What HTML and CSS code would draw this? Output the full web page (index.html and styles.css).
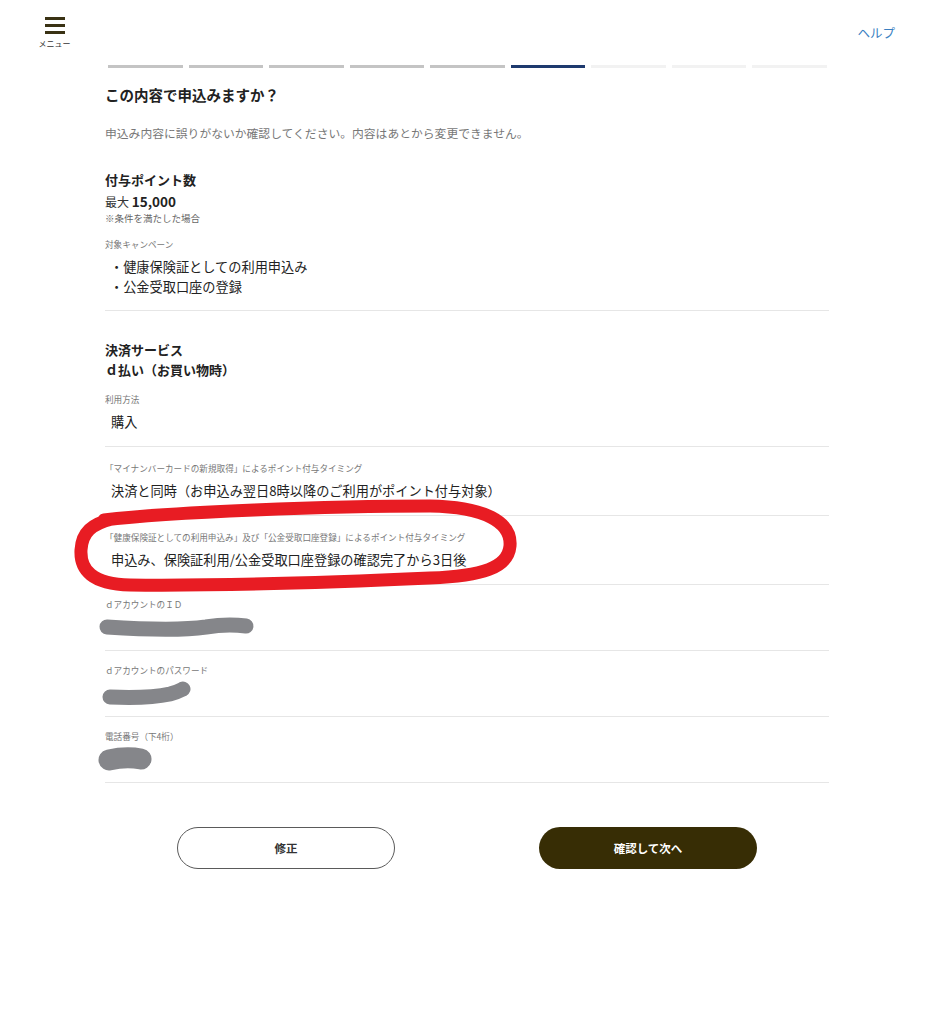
FILE: index.html
```html
<!DOCTYPE html>
<html lang="ja">
<head>
    <meta charset="UTF-8">
    <meta name="viewport" content="width=device-width, initial-scale=1.0">
    <title>申込み内容の確認</title>
    <link rel="stylesheet" href="styles.css">
</head>
<body>

    <header class="header">
        <div class="menu">
            <span class="menu-bar"></span>
            <span class="menu-bar"></span>
            <span class="menu-bar"></span>
            <span class="menu-text">メニュー</span>
        </div>
        <a href="#" class="help">ヘルプ</a>
    </header>

    <div class="container">
        <div class="progress">
            <span class="step done"></span>
            <span class="step done"></span>
            <span class="step done"></span>
            <span class="step done"></span>
            <span class="step done"></span>
            <span class="step current"></span>
            <span class="step"></span>
            <span class="step"></span>
            <span class="step"></span>
        </div>

        <h1 class="title">この内容で申込みますか？</h1>
        <p class="lead">申込み内容に誤りがないか確認してください。内容はあとから変更できません。</p>

        <div class="section points">
            <h2 class="heading">付与ポイント数</h2>
            <p class="amount">最大 <b>15,000</b></p>
            <p class="note">※条件を満たした場合</p>
            <p class="label campaign-label">対象キャンペーン</p>
            <ul class="campaign-list">
                <li>・健康保険証としての利用申込み</li>
                <li>・公金受取口座の登録</li>
            </ul>
        </div>

        <div class="section service">
            <h2 class="heading">決済サービス</h2>
            <h2 class="heading">ｄ払い（お買い物時）</h2>
            <p class="label service-label">利用方法</p>
            <p class="value">購入</p>
        </div>

        <div class="row">
            <p class="label">「マイナンバーカードの新規取得」によるポイント付与タイミング</p>
            <p class="value">決済と同時（お申込み翌日8時以降のご利用がポイント付与対象）</p>
        </div>

        <div class="row">
            <p class="label">「健康保険証としての利用申込み」及び「公金受取口座登録」によるポイント付与タイミング</p>
            <p class="value">申込み、保険証利用/公金受取口座登録の確認完了から3日後</p>
        </div>

        <div class="row masked">
            <p class="label">ｄアカウントのＩＤ</p>
            <div class="value">
                <svg class="mask" width="170" height="24" viewBox="0 0 170 24">
                    <path d="M9 12 C40 14 80 16 108 12 C126 9 140 10 148 11" />
                </svg>
            </div>
        </div>

        <div class="row masked">
            <p class="label">ｄアカウントのパスワード</p>
            <div class="value">
                <svg class="mask" width="100" height="24" viewBox="0 0 100 24">
                    <path d="M12 16 C35 17 58 16 72 13 C80 11 83 9 85 8" />
                </svg>
            </div>
        </div>

        <div class="row masked">
            <p class="label">電話番号（下4桁）</p>
            <div class="value">
                <svg class="mask" width="60" height="24" viewBox="0 0 60 24">
                    <path d="M11 13 C20 11 32 10 43 12" style="stroke-width:21" />
                </svg>
            </div>
        </div>

        <div class="buttons">
            <button class="btn btn-back" type="button">修正</button>
            <button class="btn btn-next" type="button">確認して次へ</button>
        </div>
    </div>

    <!-- 赤丸の書き込み -->
    <svg class="circle-mark" width="934" height="620" viewBox="0 0 934 620">
        <path d="M104 520 C170 512 330 506 430 506 C485 507 512 522 510 546 C508 568 482 576 430 578 C340 582 220 586 130 585 C92 584 80 570 81 550 C82 532 92 524 112 519" />
    </svg>

</body>
</html>
```

FILE: styles.css
```css
body {
    font-family: "Noto Sans CJK JP", "Noto Sans", sans-serif;
    margin: 0;
    padding: 0;
    background-color: #ffffff;
    color: #222;
    position: relative;
}
p, h1, h2, ul {
    margin: 0;
    padding: 0;
}
.header {
    display: flex;
    justify-content: space-between;
    align-items: flex-start;
    padding: 17px 39px 0 39px;
    height: 48px;
}
.menu {
    display: flex;
    flex-direction: column;
    align-items: center;
    width: 31px;
}
.menu-bar {
    display: block;
    width: 20px;
    height: 2.5px;
    background-color: #3a3214;
    margin-bottom: 4.5px;
}
.menu-text {
    font-size: 8px;
    line-height: 10px;
    color: #333;
    margin-top: 1px;
    white-space: nowrap;
}
.help {
    font-size: 12.5px;
    color: #3a7fc1;
    text-decoration: none;
    margin-top: 6px;
}
.container {
    width: 724px;
    margin-left: 105px;
}
.progress {
    display: grid;
    grid-template-columns: repeat(9, 1fr);
    gap: 6px;
    margin: 0 2px 0 3px;
}
.step {
    height: 3px;
    background-color: #f2f2f2;
}
.step.done {
    background-color: #c4c4c4;
}
.step.current {
    background-color: #1e3a6e;
}
.title {
    font-size: 14.5px;
    font-weight: 700;
    line-height: 22px;
    margin-top: 16px;
}
.lead {
    font-size: 11.8px;
    color: #777;
    line-height: 18px;
    margin-top: 18px;
}
.section {
    border-bottom: 1px solid #e6e6e6;
}
.points {
    margin-top: 28px;
    padding-bottom: 13px;
}
.heading {
    font-size: 13px;
    font-weight: 700;
    line-height: 20px;
}
.amount {
    font-size: 12px;
    line-height: 20px;
    margin-top: 1px;
    color: #333;
}
.amount b {
    font-size: 13.5px;
    color: #222;
}
.note {
    font-size: 9.5px;
    color: #666;
    line-height: 12px;
}
.label {
    font-size: 8.6px;
    line-height: 14px;
    color: #777;
    white-space: nowrap;
}
.campaign-label {
    margin-top: 13px;
}
.campaign-list {
    list-style: none;
    margin-top: 6px;
    font-size: 13.2px;
    line-height: 20px;
    padding-left: 5px;
}
.service {
    padding-top: 29px;
    padding-bottom: 14px;
}
.service-label {
    margin-top: 12px;
}
.value {
    font-size: 13.2px;
    line-height: 20px;
    margin-top: 6px;
    padding-left: 6px;
    height: 20px;
}
.row {
    padding: 14px 0;
    border-bottom: 1px solid #e6e6e6;
}
.row.masked {
    padding: 12px 0 11px;
}
.row.masked .value {
    height: 24px;
    margin-top: 4px;
}
.mask {
    display: block;
    margin-left: -13px;
}
.mask path {
    fill: none;
    stroke: #85868a;
    stroke-width: 15;
    stroke-linecap: round;
    stroke-linejoin: round;
}
.buttons {
    display: flex;
    justify-content: center;
    gap: 144px;
    margin-top: 44px;
}
.btn {
    width: 218px;
    height: 42px;
    border-radius: 21px;
    font-family: "Noto Sans CJK JP", sans-serif;
    font-size: 11.5px;
    font-weight: 700;
    cursor: pointer;
}
.btn-back {
    background-color: #fff;
    border: 1px solid #5a5a5a;
    color: #333;
}
.btn-next {
    background-color: #372d05;
    border: none;
    color: #fff;
}
.circle-mark {
    position: absolute;
    left: 0;
    top: 0;
    pointer-events: none;
}
.circle-mark path {
    fill: none;
    stroke: #e81c23;
    stroke-width: 13;
    stroke-linecap: round;
    stroke-linejoin: round;
}
```
